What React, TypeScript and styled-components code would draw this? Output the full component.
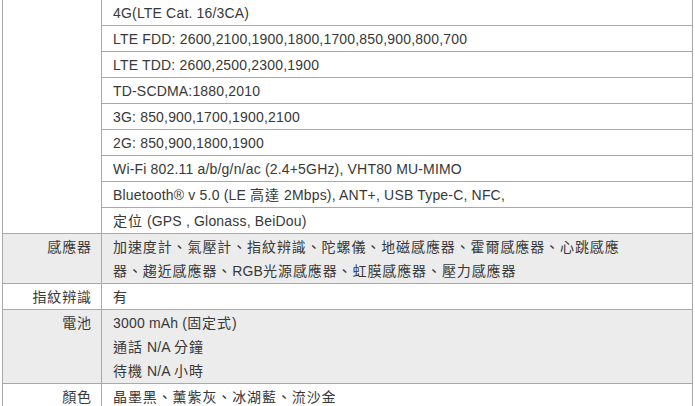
import React from "react";
import styled, { createGlobalStyle } from "styled-components";

const GlobalStyle = createGlobalStyle`
  body {
    margin: 0;
    background: #fff;
    font-family: Arial, "Liberation Sans", "Noto Sans CJK TC", sans-serif;
  }
`;

const networks = [
  "4G(LTE Cat. 16/3CA)",
  "LTE FDD: 2600,2100,1900,1800,1700,850,900,800,700",
  "LTE TDD: 2600,2500,2300,1900",
  "TD-SCDMA:1880,2010",
  "3G: 850,900,1700,1900,2100",
  "2G: 850,900,1800,1900",
  "Wi-Fi 802.11 a/b/g/n/ac (2.4+5GHz), VHT80 MU-MIMO",
  "Bluetooth® v 5.0 (LE 高達 2Mbps), ANT+, USB Type-C, NFC,",
  "定位 (GPS , Glonass, BeiDou)",
];

// chinese glyphs in the original run wider than Noto's, so space them out
const Txt = ({ children }: { children: string }) => (
  <>
    {children
      .split(/([\u3000-\u303f\u4e00-\u9fff\uff00-\uffef]+)/)
      .filter(Boolean)
      .map((part, i) =>
        /[\u3000-\u303f\u4e00-\u9fff\uff00-\uffef]/.test(part) ? (
          <Cjk key={i}>{part}</Cjk>
        ) : (
          <React.Fragment key={i}>{part}</React.Fragment>
        )
      )}
  </>
);

const App = () => {
  return (
    <>
      <GlobalStyle />
      <Wrapper>
        <SpecTable>
          <tbody>
            {networks.map((line, i) => (
              <tr key={line}>
                {i === 0 && <Label rowSpan={networks.length} />}
                <Value>
                  <Txt>{line}</Txt>
                </Value>
              </tr>
            ))}
            <Row $shaded>
              <Label>
                <Txt>感應器</Txt>
              </Label>
              <Value>
                <Txt>加速度計、氣壓計、指紋辨識、陀螺儀、地磁感應器、霍爾感應器、心跳感應</Txt>
                <br />
                <Txt>器、趨近感應器、RGB光源感應器、虹膜感應器、壓力感應器</Txt>
              </Value>
            </Row>
            <Row>
              <Label>
                <Txt>指紋辨識</Txt>
              </Label>
              <Value>
                <Txt>有</Txt>
              </Value>
            </Row>
            <Row $shaded>
              <Label>
                <Txt>電池</Txt>
              </Label>
              <Value>
                <Txt>3000 mAh (固定式)</Txt>
                <br />
                <Txt>通話 N/A 分鐘</Txt>
                <br />
                <Txt>待機 N/A 小時</Txt>
              </Value>
            </Row>
            <Row>
              <Label>
                <Txt>顏色</Txt>
              </Label>
              <Value>
                <Txt>晶墨黑、薰紫灰、冰湖藍、流沙金</Txt>
              </Value>
            </Row>
          </tbody>
        </SpecTable>
      </Wrapper>
    </>
  );
};

export default App;

const Wrapper = styled.div`
  padding-left: 2px;
  margin-top: -1px;
  width: 691px;
`;

const SpecTable = styled.table`
  width: 691px;
  border-collapse: collapse;
  table-layout: fixed;
  color: #383838;
  font-size: 14px;
  letter-spacing: 0.18px;
`;

const Cjk = styled.span`
  letter-spacing: 0.9px;
`;

const Row = styled.tr<{ $shaded?: boolean }>`
  background: ${(p) => (p.$shaded ? "#ececec" : "#fff")};
`;

const Label = styled.td`
  width: 89px;
  border: 1px solid #a9a9a9;
  padding: 1px 9px 0 0;
  text-align: right;
  vertical-align: top;
  line-height: 24px;
`;

const Value = styled.td`
  border: 1px solid #a9a9a9;
  padding: 1px 10px 0 11px;
  line-height: 24px;
  vertical-align: top;
`;
